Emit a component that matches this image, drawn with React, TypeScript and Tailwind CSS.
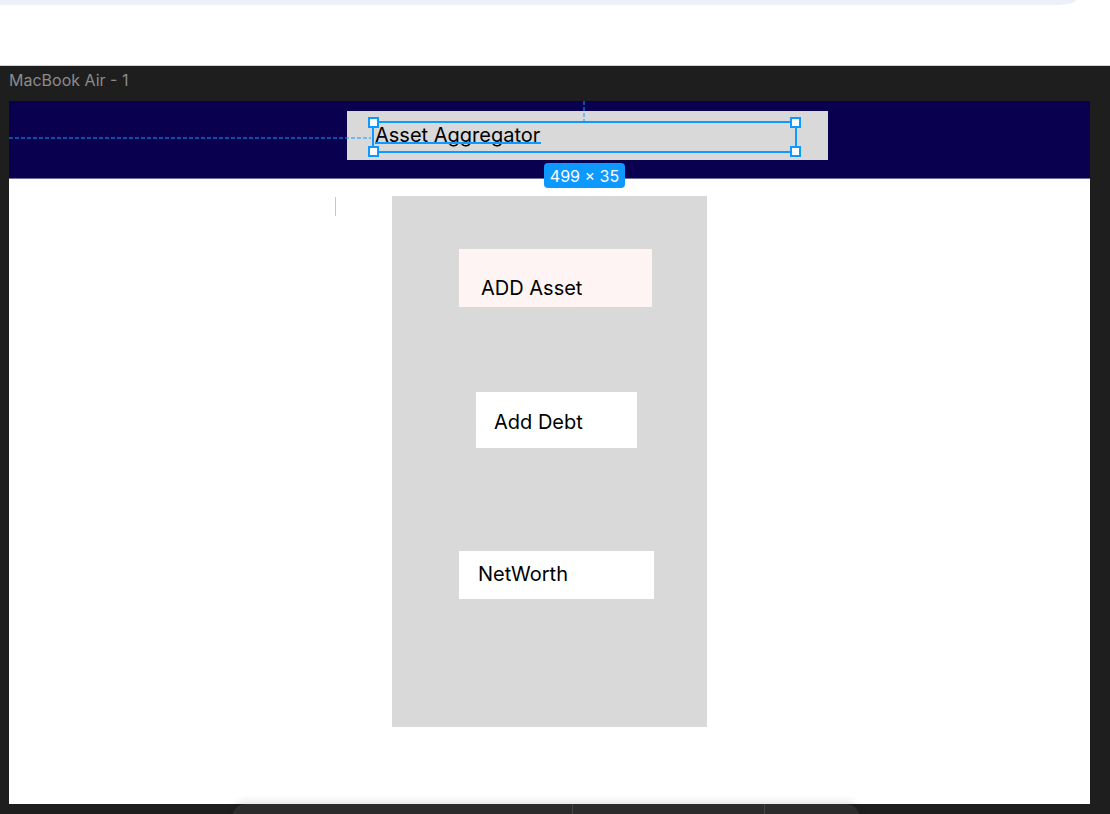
function Handle({ pos }: { pos: string }) {
  return <span className={`absolute w-[11px] h-[11px] bg-white border-2 border-[#0d99ff] ${pos}`} />;
}

function MenuBox({
  label,
  box,
  text,
}: {
  label: string;
  box: string;
  text: string;
}) {
  return (
    <div className={box}>
      <span className={`block text-[20px] leading-[24px] text-black ${text}`}>{label}</span>
    </div>
  );
}

export default function App() {
  return (
    <div className="relative w-[1110px] h-[814px] overflow-hidden bg-white flex flex-col font-['Inter',sans-serif]">
      {/* browser strip */}
      <div className="h-[66px] shrink-0 bg-white border-b border-[#d2d2d2]">
        <div className="h-[5px] w-[1076px] bg-[#ebf0f9] rounded-br-[20px_5px]" />
      </div>

      {/* canvas */}
      <div className="flex-1 bg-[#1e1e1e] pl-[9px] pr-[20px] flex flex-col">
        <div className="h-[35px] shrink-0 pt-[4px] text-[16px] leading-[20px] text-[#8b8b8b]">MacBook Air - 1</div>

        <div className="relative w-[1081px] h-[703px] shrink-0 bg-white">
          {/* header */}
          <div className="relative h-[78px] bg-[#0a0050] border-b border-[#6f6f99] pt-[10px] pl-[338px]">
            <div className="relative w-[481px] h-[49px] bg-[#d9d9d9] pl-[28px] pt-[12px]">
              <span className="block text-[20px] leading-[24px] text-black">Asset Aggregator</span>
              <div className="absolute left-[28px] top-[31px] w-[166px] h-[2px] bg-[#0d99ff]" />
              <div className="absolute left-[25px] top-[10px] w-[425px] h-[32px] border-2 border-[#0d99ff]">
                <Handle pos="-left-[6px] -top-[6px]" />
                <Handle pos="-right-[6px] -top-[6px]" />
                <Handle pos="-left-[6px] -bottom-[6px]" />
                <Handle pos="-right-[6px] -bottom-[6px]" />
              </div>
            </div>
            <svg className="absolute left-0 top-[36px]" width="362" height="2">
              <line x1="0" y1="1" x2="362" y2="1" stroke="#0d99ff" strokeWidth="1" strokeDasharray="4 2" />
            </svg>
            <svg className="absolute left-[574px] top-0" width="2" height="20">
              <line x1="1" y1="0" x2="1" y2="20" stroke="#0d99ff" strokeWidth="1" strokeDasharray="4 2" />
            </svg>
          </div>

          {/* body */}
          <div className="ml-[383px] mt-[17px] w-[315px] h-[531px] bg-[#d9d9d9] flex flex-col items-start">
            <MenuBox
              label="ADD Asset"
              box="ml-[67px] mt-[53px] w-[193px] h-[58px] bg-[#fff4f4]"
              text="pl-[22px] pt-[27px]"
            />
            <MenuBox
              label="Add Debt"
              box="ml-[84px] mt-[85px] w-[161px] h-[56px] bg-white"
              text="pl-[18px] pt-[18px]"
            />
            <MenuBox
              label="NetWorth"
              box="ml-[67px] mt-[103px] w-[195px] h-[48px] bg-white"
              text="pl-[19px] pt-[11px]"
            />
          </div>

          <div className="absolute left-[326px] top-[96px] h-[19px] border-l border-[#c8c8c8]" />

          <div className="absolute left-[535px] top-[62px] w-[81px] h-[25px] rounded-[4px] bg-[#0d99ff] flex items-center justify-center text-[16px] text-white">
            499 × 35
          </div>
        </div>
      </div>

      {/* floating toolbar */}
      <div className="absolute left-[232px] top-[804px] w-[628px] h-[24px] rounded-t-[14px] bg-[#2c2c2c] shadow-[0_-2px_8px_rgba(0,0,0,0.12)] flex">
        <div className="w-[340px]" />
        <div className="w-[193px] border-l border-r border-[#454545]" />
        <div className="flex-1" />
      </div>
    </div>
  );
}
